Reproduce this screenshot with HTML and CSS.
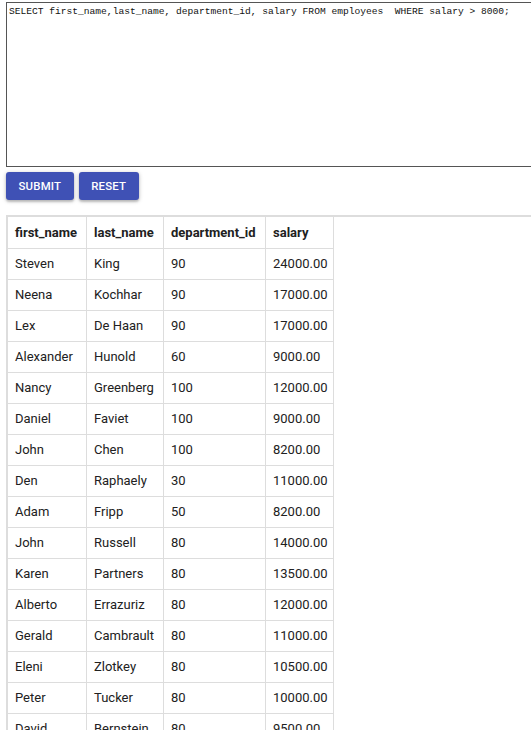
FILE: index.html
```html
<!DOCTYPE html>
<html>
<head>
<meta charset="utf-8">
<link rel="stylesheet" href="styles.css">
</head>
<body>
<div class="page">
  <textarea class="query" spellcheck="false">SELECT first_name,last_name, department_id, salary FROM employees  WHERE salary &gt; 8000;</textarea>
  <div class="actions">
    <button class="btn">Submit</button>
    <button class="btn">Reset</button>
  </div>
  <div class="results">
    <table class="grid">
      <thead>
        <tr><th class="c1">first_name</th><th class="c2">last_name</th><th class="c3">department_id</th><th class="c4">salary</th></tr>
      </thead>
      <tbody>
        <tr><td>Steven</td><td>King</td><td>90</td><td>24000.00</td></tr>
        <tr><td>Neena</td><td>Kochhar</td><td>90</td><td>17000.00</td></tr>
        <tr><td>Lex</td><td>De Haan</td><td>90</td><td>17000.00</td></tr>
        <tr><td>Alexander</td><td>Hunold</td><td>60</td><td>9000.00</td></tr>
        <tr><td>Nancy</td><td>Greenberg</td><td>100</td><td>12000.00</td></tr>
        <tr><td>Daniel</td><td>Faviet</td><td>100</td><td>9000.00</td></tr>
        <tr><td>John</td><td>Chen</td><td>100</td><td>8200.00</td></tr>
        <tr><td>Den</td><td>Raphaely</td><td>30</td><td>11000.00</td></tr>
        <tr><td>Adam</td><td>Fripp</td><td>50</td><td>8200.00</td></tr>
        <tr><td>John</td><td>Russell</td><td>80</td><td>14000.00</td></tr>
        <tr><td>Karen</td><td>Partners</td><td>80</td><td>13500.00</td></tr>
        <tr><td>Alberto</td><td>Errazuriz</td><td>80</td><td>12000.00</td></tr>
        <tr><td>Gerald</td><td>Cambrault</td><td>80</td><td>11000.00</td></tr>
        <tr><td>Eleni</td><td>Zlotkey</td><td>80</td><td>10500.00</td></tr>
        <tr><td>Peter</td><td>Tucker</td><td>80</td><td>10000.00</td></tr>
        <tr><td>David</td><td>Bernstein</td><td>80</td><td>9500.00</td></tr>
        <tr><td>Peter</td><td>Hall</td><td>80</td><td>9000.00</td></tr>
      </tbody>
    </table>
  </div>
</div>
</body>
</html>
```

FILE: styles.css
```css
html {
  overflow: hidden;
}
body {
  margin: 0;
  background: #ffffff;
  color: #212121;
  font-family: Roboto, "Liberation Sans", Arial, sans-serif;
}
.page {
  display: flex;
  flex-direction: column;
  padding: 2px 0 0 6px;
}
.query {
  display: block;
  box-sizing: border-box;
  width: 560px;
  height: 165px;
  margin: 0;
  padding: 3px 2px;
  border: 1px solid #555555;
  border-right: none;
  border-radius: 0;
  font-family: "Liberation Mono", "DejaVu Sans Mono", monospace;
  font-size: 9.6px;
  line-height: 12px;
  color: #111111;
  resize: none;
  outline: none;
  background: #ffffff;
}
.actions {
  display: flex;
  gap: 5px;
  margin-top: 5px;
}
.btn {
  height: 28px;
  padding: 0 12.5px;
  border: none;
  border-radius: 3px;
  background: #3f51b5;
  color: #ffffff;
  font-family: Roboto, "Liberation Sans", sans-serif;
  font-weight: 500;
  font-size: 11.4px;
  letter-spacing: 0.2px;
  text-transform: uppercase;
  box-shadow: 0 1px 4px rgba(0, 0, 0, 0.25), 0 2px 2px rgba(0, 0, 0, 0.14);
}
.results {
  margin-top: 15px;
  border-top: 2px solid #dddddd;
  border-left: 2px solid #dddddd;
}
.grid {
  table-layout: fixed;
  width: 326px;
  border-collapse: separate;
  border-spacing: 0;
  font-size: 13px;
}
.grid th,
.grid td {
  box-sizing: border-box;
  height: 31px;
  padding: 0 7px;
  border-right: 1px solid #dddddd;
  border-bottom: 1px solid #dddddd;
  text-align: left;
  white-space: nowrap;
  line-height: 30px;
  overflow: hidden;
}
.grid th {
  font-weight: 700;
  height: 32px;
}
.c1 { width: 79px; }
.c2 { width: 77px; }
.c3 { width: 102px; }
.c4 { width: 68px; }
```
